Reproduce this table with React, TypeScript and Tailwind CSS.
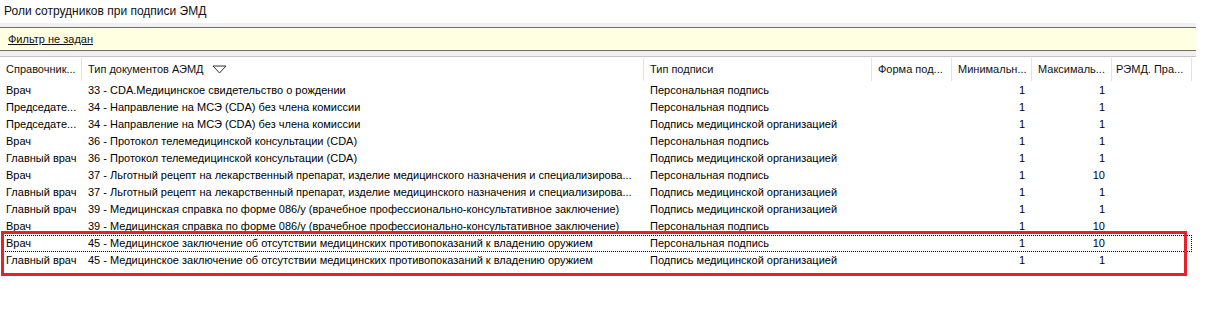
import React from "react";

type Row = {
  role: string;
  doc: string;
  sign: string;
  min: string;
  max: string;
  focused?: boolean;
};

const rows: Row[] = [
  { role: "Врач", doc: "33 - CDA.Медицинское свидетельство о рождении", sign: "Персональная подпись", min: "1", max: "1" },
  { role: "Председате...", doc: "34 - Направление на МСЭ (CDA) без члена комиссии", sign: "Персональная подпись", min: "1", max: "1" },
  { role: "Председате...", doc: "34 - Направление на МСЭ (CDA) без члена комиссии", sign: "Подпись медицинской организацией", min: "1", max: "1" },
  { role: "Врач", doc: "36 - Протокол телемедицинской консультации (CDA)", sign: "Персональная подпись", min: "1", max: "1" },
  { role: "Главный врач", doc: "36 - Протокол телемедицинской консультации (CDA)", sign: "Подпись медицинской организацией", min: "1", max: "1" },
  {
    role: "Врач",
    doc: "37 - Льготный рецепт на лекарственный препарат, изделие медицинского назначения и специализирова...",
    sign: "Персональная подпись",
    min: "1",
    max: "10",
  },
  {
    role: "Главный врач",
    doc: "37 - Льготный рецепт на лекарственный препарат, изделие медицинского назначения и специализирова...",
    sign: "Подпись медицинской организацией",
    min: "1",
    max: "1",
  },
  {
    role: "Главный врач",
    doc: "39 - Медицинская справка по форме 086/у (врачебное профессионально-консультативное заключение)",
    sign: "Подпись медицинской организацией",
    min: "1",
    max: "1",
  },
  {
    role: "Врач",
    doc: "39 - Медицинская справка по форме 086/у (врачебное профессионально-консультативное заключение)",
    sign: "Персональная подпись",
    min: "1",
    max: "10",
  },
  {
    role: "Врач",
    doc: "45 - Медицинское заключение об отсутствии медицинских противопоказаний к владению оружием",
    sign: "Персональная подпись",
    min: "1",
    max: "10",
    focused: true,
  },
  {
    role: "Главный врач",
    doc: "45 - Медицинское заключение об отсутствии медицинских противопоказаний к владению оружием",
    sign: "Подпись медицинской организацией",
    min: "1",
    max: "1",
  },
];

const SortIcon = () => (
  <svg width="15" height="9" viewBox="0 0 15 9" className="ml-[8px]">
    <path d="M1 1 L14 1 L7.5 8 Z" fill="none" stroke="#333" strokeWidth="1" />
  </svg>
);

const App: React.FC = () => {
  return (
    <div className="w-[1226px] h-[325px] bg-white text-black font-['Liberation_Sans',Arial,sans-serif] overflow-hidden">
      <div className="h-[23px] pl-[4px] pt-[3px] text-[12px] leading-[16px] text-[#111]">
        Роли сотрудников при подписи ЭМД
      </div>

      <div className="w-[1196px] bg-[#f0f0f0] pt-[4px] pb-[5px] border-b border-[#c4c4c4]">
        <div className="h-[24px] bg-[#ffffe1] border-y border-[#6e6e6e] flex items-center pl-[8px]">
          <span className="text-[11px] underline text-[#111]">Фильтр не задан</span>
        </div>
      </div>

      <div className="relative">
        <div className="flex h-[25px] items-stretch text-[11px] text-[#111]">
          <div className="w-[82px] border-r border-[#e3e3e3] my-[1px] pl-[6px] flex items-center whitespace-nowrap overflow-hidden">
            Справочник...
          </div>
          <div className="w-[562px] border-r border-[#e3e3e3] my-[1px] pl-[6px] flex items-center whitespace-nowrap">
            Тип документов АЭМД
            <SortIcon />
          </div>
          <div className="w-[228px] border-r border-[#e3e3e3] my-[1px] pl-[6px] flex items-center whitespace-nowrap">
            Тип подписи
          </div>
          <div className="w-[80px] border-r border-[#e3e3e3] my-[1px] pl-[6px] flex items-center whitespace-nowrap overflow-hidden">
            Форма под...
          </div>
          <div className="w-[80px] border-r border-[#e3e3e3] my-[1px] pl-[6px] flex items-center whitespace-nowrap overflow-hidden">
            Минимальн...
          </div>
          <div className="w-[80px] border-r border-[#e3e3e3] my-[1px] pl-[6px] flex items-center whitespace-nowrap overflow-hidden">
            Максималь...
          </div>
          <div className="w-[80px] border-r border-[#e3e3e3] my-[1px] pl-[4px] flex items-center whitespace-nowrap overflow-hidden">
            РЭМД. Пра...
          </div>
        </div>

        {rows.map((r, i) => (
          <div
            key={i}
            className={
              "flex h-[17px] items-center text-[11px] text-black whitespace-nowrap w-[1190px] ml-[2px] " +
              (r.focused ? "outline-1 outline-dotted outline-black -outline-offset-1" : "")
            }
          >
            <div className="w-[80px] pl-[4px] overflow-hidden">{r.role}</div>
            <div className="w-[562px] pl-[6px] overflow-hidden">{r.doc}</div>
            <div className="w-[228px] pl-[6px] overflow-hidden">{r.sign}</div>
            <div className="w-[80px]" />
            <div className="w-[80px] pr-[7px] text-right">{r.min}</div>
            <div className="w-[80px] pr-[7px] text-right">{r.max}</div>
            <div className="w-[80px]" />
          </div>
        ))}

        <div className="absolute left-[1px] top-[174px] w-[1186px] h-[45px] border-[3px] border-[#e8202a] pointer-events-none" />
      </div>
    </div>
  );
};

export default App;
